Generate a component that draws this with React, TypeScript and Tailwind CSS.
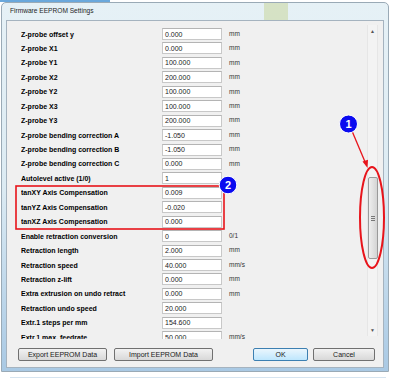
import React from 'react';

const rows: [string, string, string][] = [
  ['Z-probe offset y', '0.000', 'mm'],
  ['Z-probe X1', '0.000', 'mm'],
  ['Z-probe Y1', '100.000', 'mm'],
  ['Z-probe X2', '200.000', 'mm'],
  ['Z-probe Y2', '100.000', 'mm'],
  ['Z-probe X3', '100.000', 'mm'],
  ['Z-probe Y3', '200.000', 'mm'],
  ['Z-probe bending correction A', '-1.050', 'mm'],
  ['Z-probe bending correction B', '-1.050', 'mm'],
  ['Z-probe bending correction C', '0.000', 'mm'],
  ['Autolevel active (1/0)', '1', ''],
  ['tanXY Axis Compensation', '0.009', ''],
  ['tanYZ Axis Compensation', '-0.020', ''],
  ['tanXZ Axis Compensation', '0.000', ''],
  ['Enable retraction conversion', '0', '0/1'],
  ['Retraction length', '2.000', 'mm'],
  ['Retraction speed', '40.000', 'mm/s'],
  ['Retraction z-lift', '0.000', 'mm'],
  ['Extra extrusion on undo retract', '0.000', 'mm'],
  ['Retraction undo speed', '20.000', ''],
  ['Extr.1 steps per mm', '154.600', ''],
  ['Extr.1 max. feedrate', '50.000', 'mm/s'],
];

const Button = ({ label, width, primary }: { label: string; width: string; primary?: boolean }) => (
  <button
    className={`${width} h-[13px] rounded-[2px] border text-[7px] text-[#1a1a1a] leading-none flex items-center justify-center ${
      primary
        ? 'border-[#3c7fb1] bg-gradient-to-b from-[#eaf6fd] to-[#bee6fd]'
        : 'border-[#707070] bg-gradient-to-b from-[#f2f2f2] to-[#d8d8d8]'
    }`}
  >
    {label}
  </button>
);

const Row = ({ label, value, unit }: { label: string; value: string; unit: string }) => (
  <div className="h-[14.45px] flex items-start">
    <div className="w-[141px] h-[12px] flex items-center text-[7px] font-bold text-black leading-none">{label}</div>
    <div className="w-[60px] h-[12px] bg-white border border-[#c8c8c8] border-t-[#b4b4b4] flex items-center pl-[2px] text-[7px] text-[#222] leading-none">
      {value}
    </div>
    <div className="h-[12px] flex items-center pl-[7px] text-[6.5px] text-[#333] leading-none">{unit}</div>
  </div>
);

const Scrollbar = () => (
  <div className="w-[11px] h-[311px] mt-[4px] bg-[#f3f3f3] border-x border-[#e6e6e6] flex flex-col items-center">
    <div className="h-[12px] w-full flex items-center justify-center text-[5px] text-[#555] leading-none">▲</div>
    <div className="flex-1 w-full pt-[140px]">
      <div className="h-[82px] w-[10px] mx-auto rounded-[2px] border border-[#9a9a9a] bg-gradient-to-r from-[#eeeeee] to-[#d4d4d4] flex flex-col items-center justify-center gap-[1px]">
        <div className="w-[4px] h-px bg-[#777]" />
        <div className="w-[4px] h-px bg-[#777]" />
        <div className="w-[4px] h-px bg-[#777]" />
      </div>
    </div>
    <div className="h-[12px] w-full flex items-center justify-center text-[5px] text-[#555] leading-none">▼</div>
  </div>
);

const Annotations = () => (
  <svg className="absolute inset-0 pointer-events-none" width="396" height="384" viewBox="0 0 396 384">
    <rect x="16" y="186" width="208" height="43" fill="none" stroke="#e8141b" strokeWidth="1.6" />
    <ellipse cx="372" cy="217.5" rx="12" ry="50.5" fill="none" stroke="#e8141b" strokeWidth="2" />
    <line x1="352" y1="131" x2="365.5" y2="163" stroke="#e8141b" strokeWidth="1.3" />
    <polygon points="367.5,168 362.5,161.5 368,159.8" fill="#e8141b" />
    <circle cx="348.5" cy="124" r="9" fill="#0a0af0" stroke="#ffffff" strokeWidth="1" />
    <text x="348.5" y="127.8" textAnchor="middle" fill="#fff" fontSize="11" fontWeight="bold" fontFamily="Liberation Sans, Arial, sans-serif">1</text>
    <circle cx="228" cy="185" r="8.8" fill="#0a0af0" stroke="#ffffff" strokeWidth="1" />
    <text x="228" y="188.8" textAnchor="middle" fill="#fff" fontSize="11" fontWeight="bold" fontFamily="Liberation Sans, Arial, sans-serif">2</text>
  </svg>
);

export default function App() {
  return (
    <div className="w-[396px] h-[384px] bg-white relative overflow-hidden font-['Liberation_Sans',Arial,sans-serif]">
      <div className="h-[2px] w-[110px] bg-[#6aa8dc]" />
      <div className="ml-[1px] w-[388px] h-[370px] rounded-t-[5px] border border-[#9aaab6] bg-gradient-to-b from-[#e6f1f6] via-[#dcebf3] to-[#a9c9e4] px-[4px] pb-[3px] flex flex-col relative">
        <div className="absolute left-[262px] top-0 w-[24px] h-[17px] bg-[#cfdcb0] opacity-70" />
        <div className="h-[17px] flex items-center pl-[4px] text-[6.6px] text-[#1e1e1e] leading-none relative">Firmware EEPROM Settings</div>
        <div className="flex-1 bg-[#f0f0f0] border border-[#a5b3bf] flex flex-col relative">
          <div className="flex pl-[14px] pr-[5px]">
            <div className="flex-1 h-[318px] overflow-hidden pt-[7px]">
              {rows.map(([l, v, u]) => (
                <Row key={l} label={l} value={v} unit={u} />
              ))}
            </div>
            <Scrollbar />
          </div>
          <div className="flex items-center pl-[11px] pt-[9px]">
            <Button label="Export EEPROM Data" width="w-[89px]" />
            <div className="w-[7px]" />
            <Button label="Import EEPROM Data" width="w-[99px]" />
            <div className="w-[40px]" />
            <Button label="OK" width="w-[55px]" primary />
            <div className="w-[5px]" />
            <Button label="Cancel" width="w-[62px]" />
          </div>
        </div>
      </div>
      <div className="mt-[5px] mx-[10px] h-px bg-[#d6e4f0]" />
      <Annotations />
    </div>
  );
}
